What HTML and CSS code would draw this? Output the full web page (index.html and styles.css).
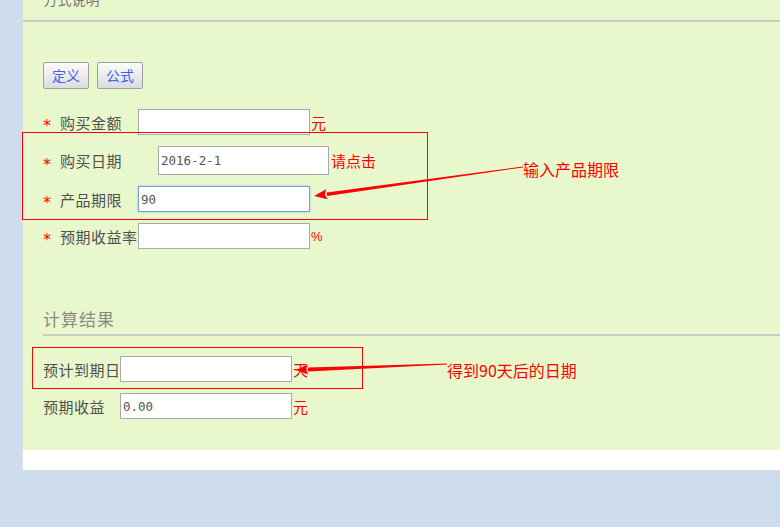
FILE: index.html
```html
<!DOCTYPE html>
<html lang="zh-CN">
<head>
  <meta charset="UTF-8">
  <title>收益计算</title>
  <link rel="stylesheet" href="styles.css">
</head>
<body>

  <!-- Panel -->
  <div class="page">
    <div class="main">
      <div class="title-bar">
        <span class="title"><span class="title-req">*</span>方式说明</span>
      </div>

      <div class="tools">
        <button type="button" class="btn">定义</button>
        <button type="button" class="btn">公式</button>
      </div>

      <!-- Input form -->
      <form class="form">
        <div class="row">
          <span class="req">*</span>
          <label class="label" for="amount">购买金额</label>
          <input type="text" id="amount" class="field">
          <span class="unit">元</span>
        </div>
        <div class="row row-date">
          <span class="req">*</span>
          <label class="label" for="buyDate">购买日期</label>
          <input type="text" id="buyDate" class="field field-date" value="2016-2-1">
          <span class="unit">请点击</span>
        </div>
        <div class="row">
          <span class="req">*</span>
          <label class="label" for="term">产品期限</label>
          <input type="text" id="term" class="field field-focus" value="90">
        </div>
        <div class="row">
          <span class="req">*</span>
          <label class="label" for="rate">预期收益率</label>
          <input type="text" id="rate" class="field">
          <span class="unit unit-pct">%</span>
        </div>
      </form>

      <!-- Result -->
      <h3 class="section-head">计算结果</h3>
      <div class="results">
        <div class="row">
          <label class="label label-result" for="endDate">预计到期日</label>
          <input type="text" id="endDate" class="field">
          <span class="unit">天</span>
        </div>
        <div class="row">
          <label class="label label-result" for="income">预期收益</label>
          <input type="text" id="income" class="field" value="0.00">
          <span class="unit">元</span>
        </div>
      </div>
    </div>
  </div>

  <!-- Annotations drawn over the screenshot -->
  <div class="mark-box box-term"></div>
  <div class="mark-box box-date"></div>
  <svg class="marks" width="780" height="527" viewBox="0 0 780 527">
    <polygon points="523,167.4 327.1,196 326.7,192.4 523,166.6" fill="#f00"/>
    <polygon points="314,196 327.6,199.2 324.9,194.5 326.2,189.2" fill="#f00"/>
    <polygon points="447,364.5 308.1,371.5 307.9,367.5 447,363.5" fill="#f00"/>
    <polygon points="296,370 308.2,374.5 306,369.6 307.8,364.5" fill="#f00"/>
  </svg>
  <div class="note note-term">输入产品期限</div>
  <div class="note note-date">得到90天后的日期</div>

</body>
</html>
```

FILE: styles.css
```css
body {
  margin: 0;
  background-color: #cddded;
  font-family: "Noto Sans CJK SC", "Noto Sans", sans-serif;
  color: #555;
}
.page {
  margin-left: 22px;
  padding-bottom: 20px;
  background-color: #fff;
  border-left: 1px solid #dedede;
  border-bottom: 1px solid #dedede;
}
.main {
  background-color: #e8f7cc;
  padding-bottom: 31px;
}

/* Top title, mostly scrolled away */
.title-bar {
  display: flex;
  align-items: flex-start;
  height: 20px;
  padding-left: 13px;
  border-bottom: 2px solid #cccccc;
}
.title {
  margin-top: -11px;
  line-height: 20px;
  font-size: 14px;
  color: #777;
}
.title-req {
  color: #f00;
  margin-right: 1px;
}

/* Buttons */
.tools {
  display: flex;
  gap: 8px;
  padding: 40px 0 0 20px;
}
.btn {
  width: 46px;
  height: 27px;
  padding: 0;
  font-family: inherit;
  font-size: 14px;
  line-height: 25px;
  color: #3a62f0;
  background: linear-gradient(#fbfbfb, #dcdcdc);
  border: 1px solid #a0a0a0;
  border-radius: 2px;
}

/* Rows */
.form,
.results {
  display: flex;
  flex-direction: column;
  gap: 11px;
}
.form {
  margin-top: 20px;
}
.results {
  margin-top: 20px;
}
.row {
  display: flex;
  align-items: center;
  height: 26px;
  padding-left: 20px;
}
.row-date {
  height: 29px;
}
.req {
  width: 17px;
  height: 26px;
  font-family: "DejaVu Sans", sans-serif;
  font-size: 16px;
  line-height: 34px;
  color: #f00;
}
.label {
  width: 78px;
  font-size: 15px;
  letter-spacing: 0.5px;
  white-space: nowrap;
  color: #505050;
}
.label-result {
  width: 77px;
}
.field {
  box-sizing: border-box;
  width: 172px;
  height: 26px;
  margin: 0;
  padding: 0 2px;
  font-family: "DejaVu Sans Mono", monospace;
  font-size: 12.5px;
  color: #555;
  background: #fff;
  border: 1px solid #a9a9a9;
  border-radius: 0;
  outline: none;
}
.field-date {
  width: 171px;
  height: 29px;
  margin-left: 20px;
}
.field-focus {
  border-color: #7a9fd8;
  box-shadow: 0 0 2px #9fbde8;
}
.unit {
  margin-left: 1px;
  font-size: 15px;
  color: #f00;
}
.row-date .unit {
  margin-left: 2px;
}
.unit-pct {
  font-family: "Liberation Sans", sans-serif;
  font-size: 13px;
}

/* Result heading */
.section-head {
  margin: 58px 0 0 20px;
  padding-bottom: 3px;
  font-size: 17px;
  font-weight: normal;
  line-height: 24px;
  letter-spacing: 1px;
  color: #888;
  border-bottom: 2px solid #cccccc;
}

/* Annotation layer */
.mark-box {
  position: absolute;
  border: 1px solid #f00;
  pointer-events: none;
}
.box-term {
  left: 22px;
  top: 132px;
  width: 404px;
  height: 86px;
}
.box-date {
  left: 32px;
  top: 347px;
  width: 329px;
  height: 40px;
}
.marks {
  position: absolute;
  top: 0;
  left: 0;
  pointer-events: none;
}
.note {
  position: absolute;
  font-size: 16px;
  line-height: 20px;
  color: #f00;
  white-space: nowrap;
}
.note-term {
  left: 523px;
  top: 159px;
}
.note-date {
  left: 447px;
  top: 360px;
}
```
